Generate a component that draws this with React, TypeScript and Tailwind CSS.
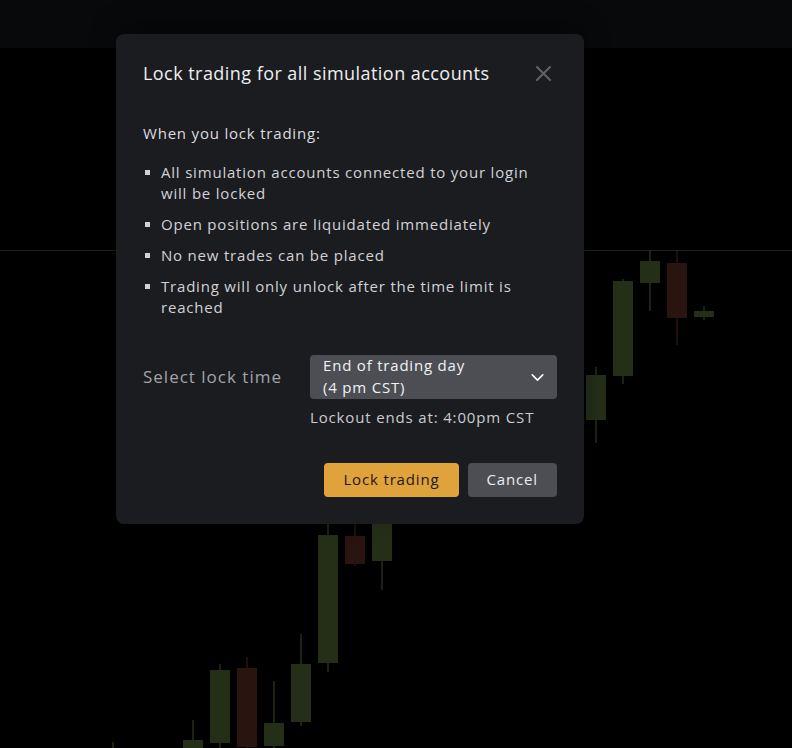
import { ChevronDown } from 'lucide-react'

type Candle = { x: number; open: number; close: number; high: number; low: number; up: boolean }

const candles: Candle[] = [
  { x: 113, open: 760, close: 755, high: 742, low: 760, up: true },
  { x: 193, open: 760, close: 740, high: 720, low: 760, up: true },
  { x: 220, open: 743, close: 670, high: 664, low: 760, up: true },
  { x: 247, open: 668, close: 747, high: 657, low: 760, up: false },
  { x: 274, open: 746, close: 723, high: 681, low: 760, up: true },
  { x: 301, open: 722, close: 664, high: 634, low: 726, up: true },
  { x: 328, open: 663, close: 535, high: 500, low: 672, up: true },
  { x: 355, open: 536, close: 564, high: 500, low: 566, up: false },
  { x: 382, open: 561, close: 500, high: 500, low: 590, up: true },
  { x: 596, open: 420, close: 375, high: 367, low: 443, up: true },
  { x: 623, open: 376, close: 281, high: 279, low: 384, up: true },
  { x: 650, open: 283, close: 261, high: 250, low: 311, up: true },
  { x: 677, open: 263, close: 318, high: 251, low: 345, up: false },
  { x: 704, open: 317, close: 311, high: 306, low: 320, up: true },
]

const bullets = [
  'All simulation accounts connected to your login will be locked',
  'Open positions are liquidated immediately',
  'No new trades can be placed',
  'Trading will only unlock after the time limit is reached',
]

function Chart() {
  return (
    <svg className="absolute inset-0" width={792} height={748} viewBox="0 0 792 748">
      <line x1={0} y1={250.5} x2={792} y2={250.5} stroke="#1d2516" strokeWidth={1} />
      {candles.map((c) => {
        const top = Math.min(c.open, c.close)
        const h = Math.max(Math.abs(c.open - c.close), 2)
        const color = c.up ? '#252f18' : '#2a140f'
        return (
          <g key={c.x}>
            <rect x={c.x - 0.75} y={c.high} width={1.5} height={c.low - c.high} fill={color} />
            <rect x={c.x - 10} y={top} width={20} height={h} fill={color} />
          </g>
        )
      })}
    </svg>
  )
}

export default function App() {
  return (
    <div
      className="relative h-[748px] w-[792px] overflow-hidden bg-black"
      style={{ fontFamily: '"Open Sans", "Liberation Sans", sans-serif' }}
    >
      <div className="h-12 bg-[#08090b]" />
      <Chart />

      <div className="absolute left-[116px] top-[34px] w-[468px] rounded-lg bg-[#1b1c20] px-[27px] pt-[25px] pb-[27px] shadow-[0_-8px_24px_rgba(0,0,0,0.35)]">
        <div className="flex items-center justify-between">
          <h2 className="text-[18px] leading-[28px] tracking-[0.45px] text-[#eeeeef]">
            Lock trading for all simulation accounts
          </h2>
          <svg width={15} height={15} viewBox="0 0 15 15" className="mr-[6px] text-[#616267]" aria-hidden>
            <path d="M1 1 L14 14 M14 1 L1 14" stroke="currentColor" strokeWidth={2} strokeLinecap="round" />
          </svg>
        </div>

        <p className="mt-[36px] text-[15px] leading-[21px] tracking-[0.8px] text-[#dcdcdf]">
          When you lock trading:
        </p>

        <ul className="mt-[18px] flex flex-col gap-[10px]">
          {bullets.map((b) => (
            <li key={b} className="flex text-[15px] leading-[21px] tracking-[0.8px] text-[#d2d2d6]">
              <span className="mt-[8px] mr-[11px] ml-[2px] size-[5px] shrink-0 bg-[#d2d2d6]" />
              <span>{b}</span>
            </li>
          ))}
        </ul>

        <div className="mt-[37px] flex items-center">
          <span className="w-[167px] text-[17px] tracking-[1px] text-[#a3a3a8]">Select lock time</span>
          <div className="flex h-[44px] flex-1 items-center justify-between rounded bg-[#4c4e54] pr-[9px] pl-[13px]">
            <span className="pb-[2px] text-[15px] leading-[22px] tracking-[0.8px] text-[#f2f2f3]">
              End of trading day
              <br />
              (4 pm CST)
            </span>
            <ChevronDown className="size-[21px] text-white" strokeWidth={1.8} aria-hidden />
          </div>
        </div>
        <p className="mt-[7px] ml-[167px] text-[15px] leading-[22px] tracking-[0.85px] text-[#cbcbcf]">
          Lockout ends at: 4:00pm CST
        </p>

        <div className="mt-[35px] flex justify-end gap-[9px]">
          <button className="h-[34px] rounded bg-[#e0a23b] px-[19px] pb-[1px] text-[15px] tracking-[0.85px] text-[#1b1b1b]">
            Lock trading
          </button>
          <button className="h-[34px] rounded bg-[#4c4e54] px-[19px] pb-[1px] text-[15px] tracking-[0.85px] text-[#ececee]">
            Cancel
          </button>
        </div>
      </div>
    </div>
  )
}
